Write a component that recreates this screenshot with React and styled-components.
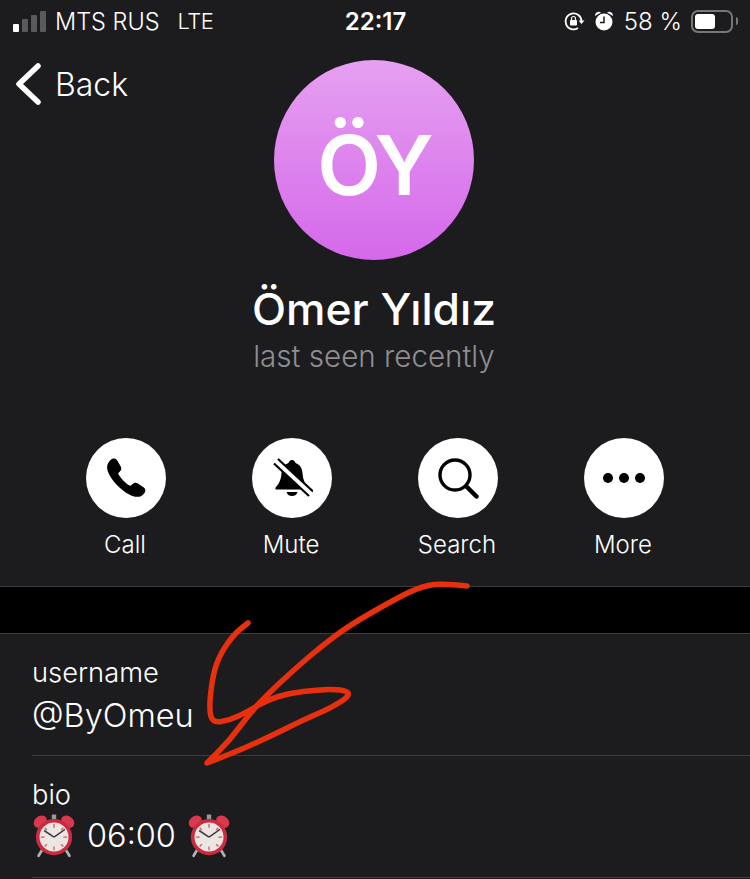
import React from 'react';
import styled, { createGlobalStyle } from 'styled-components';

const GlobalStyle = createGlobalStyle`
    html, body {
        margin: 0;
        padding: 0;
        background: #1c1c1e;
    }
`

// points read off the reference, smoothed with quadratics through the midpoints
const scribblePoints = [
    [467, 586], [440, 583], [417, 588], [390, 602], [350, 625], [323, 645], [297, 667], [270, 692],
    [250, 713], [230, 740], [207, 763], [233, 753], [267, 738], [303, 720], [333, 707], [352, 694],
    [340, 689], [317, 690], [290, 693], [267, 700], [247, 712], [230, 720], [213, 723], [209, 710],
    [212, 680], [218, 658], [233, 635], [248, 623],
];

function smoothPath(points) {
    let d = `M${points[0][0]} ${points[0][1]}`;
    for (let i = 1; i < points.length - 1; i++) {
        // the tip of the arrow stays sharp
        if (points[i][0] === 207) {
            d += ` L${points[i][0]} ${points[i][1]}`;
            continue;
        }
        const midX = (points[i][0] + points[i + 1][0]) / 2;
        const midY = (points[i][1] + points[i + 1][1]) / 2;
        d += ` Q${points[i][0]} ${points[i][1]} ${midX} ${midY}`;
    }
    const last = points[points.length - 1];
    return `${d} L${last[0]} ${last[1]}`;
}

function AlarmIcon({ size }) {
    return (
        <svg width={size} height={size} viewBox="0 0 40 40">
            <path d="M9 33 L6 38" stroke="#aeb4b8" strokeWidth="2.4" strokeLinecap="round" />
            <path d="M31 33 L34 38" stroke="#aeb4b8" strokeWidth="2.4" strokeLinecap="round" />
            <rect x="18" y="0.500" width="4" height="4" fill="#9a9a9e" />
            <ellipse cx="7.500" cy="7" rx="6.500" ry="5" transform="rotate(-40 7.500 7)" fill="#d8394c" />
            <ellipse cx="32.500" cy="7" rx="6.500" ry="5" transform="rotate(40 32.500 7)" fill="#d8394c" />
            <circle cx="20" cy="21" r="16.500" fill="#c92c40" />
            <circle cx="20" cy="21" r="13.200" fill="#ece6e3" />
            <path d="M20 9v3.500M20 29.500v3.500M8 21h3.500M28.500 21h3.500M11.500 12.500l2 2M28.500 12.500l-2 2M11.500 29.500l2-2M28.500 29.500l-2-2" stroke="#c9606c" strokeWidth="1.200" />
            <path d="M20 21 L11 15" stroke="#3a3a40" strokeWidth="1.400" />
            <path d="M20 21 L30 14" stroke="#3a3a40" strokeWidth="1.200" />
        </svg>
    )
}

function CallIcon() {
    return (
        <svg width="44" height="44" viewBox="0 0 42 42">
            <path d="M6 4 C8 2 11 2 12.500 4 L16 10 C17 12 16.500 13.500 15 15 L13.500 16.500 C14.500 20 21.500 27.500 25.500 28.500 L27 27 C28.500 25.500 30 25 32 26 L38 30 C40 31.500 40 34 38 36 L36.500 37.500 C34 40 28 39.500 21 35 C12 29 4 19 3 12 C2.500 9 4 6 6 4 Z" fill="#000" />
        </svg>
    )
}

function MuteIcon() {
    return (
        <svg width="42" height="42" viewBox="0 0 42 42">
            <path d="M21 3 C23 3 24 4.500 24.500 6 C29 7.500 31 11 31.500 16 C32 23 34 27 37.500 30.500 L37.500 32.500 L4.500 32.500 L4.500 30.500 C8 27 10 23 10.500 16 C11 11 13 7.500 17.500 6 C18 4.500 19 3 21 3 Z" fill="#000" />
            <path d="M15.500 35 H26.500 C25.500 38 23.500 39 21 39 C18.500 39 16.500 38 15.500 35 Z" fill="#000" />
            <path d="M4 4 L40 37" stroke="#fff" strokeWidth="6" />
            <path d="M3 6.500 L38 39" stroke="#000" strokeWidth="2.200" />
            <path d="M7 2 L42 34.500" stroke="#000" strokeWidth="2.200" />
        </svg>
    )
}

function SearchIcon() {
    return (
        <svg width="42" height="42" viewBox="0 0 42 42" fill="none" stroke="#000">
            <circle cx="18" cy="18" r="15" strokeWidth="3.400" />
            <path d="M29.500 29.500 L39.500 39.500" strokeWidth="4.500" strokeLinecap="round" />
        </svg>
    )
}

function MoreIcon() {
    return (
        <svg width="44" height="12" viewBox="0 0 44 12" fill="#000">
            <circle cx="6" cy="6" r="5" />
            <circle cx="22" cy="6" r="5" />
            <circle cx="38" cy="6" r="5" />
        </svg>
    )
}

const actions = [
    { label: 'Call', icon: <CallIcon /> },
    { label: 'Mute', icon: <MuteIcon /> },
    { label: 'Search', icon: <SearchIcon /> },
    { label: 'More', icon: <MoreIcon /> },
];

export default function App() {
    return (
        <Page>
            <GlobalStyle />
            <StatusBar>
                <StatusSide>
                    <Signal>
                        <Bar $h={8} $on />
                        <Bar $h={13} />
                        <Bar $h={17} />
                        <Bar $h={21} />
                    </Signal>
                    <Carrier>MTS RUS</Carrier>
                    <Network>LTE</Network>
                </StatusSide>
                <Clock>22:17</Clock>
                <StatusSide $right>
                    <svg width="22" height="22" viewBox="0 0 22 22" fill="none">
                        <path d="M18.500 11 A8 8 0 1 0 15 18" stroke="#fff" strokeWidth="1.800" />
                        <path d="M15.500 10.500 h6 l-3 3.500 z" fill="#fff" />
                        <rect x="7" y="10" width="7" height="5.500" rx="1" fill="#fff" />
                        <path d="M8.500 10 V8.500 a2 2 0 0 1 4 0 V10" stroke="#fff" strokeWidth="1.200" />
                    </svg>
                    <AlarmGlyph width="20" height="22" viewBox="0 0 20 22">
                        <circle cx="10" cy="12" r="8.500" fill="#fff" />
                        <path d="M1 6 C1 2 5 1 7 2.500 Z M19 6 C19 2 15 1 13 2.500 Z" fill="#fff" />
                        <path d="M10 6.500 V12.500 H6" stroke="#1c1c1e" strokeWidth="1.500" fill="none" />
                    </AlarmGlyph>
                    <Percent>58 %</Percent>
                    <Battery>
                        <BatteryFill $level={58} />
                    </Battery>
                    <BatteryCap />
                </StatusSide>
            </StatusBar>

            <Header>
                <BackLink>
                    <svg width="28" height="44" viewBox="0 0 28 44" fill="none">
                        <path d="M24 4 L5 22 L24 40" stroke="#fff" strokeWidth="5.500" strokeLinecap="round" strokeLinejoin="round" />
                    </svg>
                    <BackText>Back</BackText>
                </BackLink>
                <Avatar>ÖY</Avatar>
                <Name>Ömer Yıldız</Name>
                <LastSeen>last seen recently</LastSeen>
            </Header>

            <Actions>
                {actions.map((a) => (
                    <Action key={a.label}>
                        <Circle>{a.icon}</Circle>
                        <ActionLabel>{a.label}</ActionLabel>
                    </Action>
                ))}
            </Actions>

            <Gap />

            <Section>
                <Row>
                    <Label>username</Label>
                    <Value $top={3}>@ByOmeu</Value>
                </Row>
                <Row>
                    <Label>bio</Label>
                    <Value $top={1}>
                        <AlarmIcon size={44} />
                        <span>06:00</span>
                        <AlarmIcon size={44} />
                    </Value>
                </Row>
            </Section>

            <Scribble width="750" height="879" viewBox="0 0 750 879" fill="none">
                <path
                    d={smoothPath(scribblePoints)}
                    stroke="#e8300e"
                    strokeWidth="5.500"
                    strokeLinecap="round"
                    strokeLinejoin="round"
                />
            </Scribble>
        </Page>
    )
}

const Page = styled.div`
    width: 750px;
    height: 879px;
    position: relative;
    overflow: hidden;
    background: #1c1c1e;
    color: #fff;
    font-family: Inter, "Liberation Sans", sans-serif;
`
const StatusBar = styled.div`
    height: 42px;
    display: grid;
    grid-template-columns: 1fr auto 1fr;
    align-items: center;
    padding: 0 12px 0 13px;
`
const StatusSide = styled.div`
    display: flex;
    align-items: center;
    justify-content: ${(props) => (props.$right ? 'flex-end' : 'flex-start')};
    gap: ${(props) => (props.$right ? '9px' : '18px')};
`
const Signal = styled.div`
    display: flex;
    align-items: flex-end;
    gap: 3px;
    margin-right: -9px;
`
const Bar = styled.div`
    width: 6px;
    height: ${(props) => props.$h}px;
    border-radius: 1px;
    background: ${(props) => (props.$on ? '#fff' : '#5a5a5c')};
`
const Carrier = styled.span`
    font-size: 23.500px;
    font-weight: 300;
`
const Network = styled.span`
    font-size: 22px;
    font-weight: 300;
    letter-spacing: -0.600px;
`
const Clock = styled.span`
    font-size: 24px;
    font-weight: 600;
`
const AlarmGlyph = styled.svg`
    margin-right: 1px;
`
const Percent = styled.span`
    font-size: 24px;
    font-weight: 300;
`
const Battery = styled.div`
    width: 42px;
    height: 23px;
    box-sizing: border-box;
    border: 2px solid #77777a;
    border-radius: 7px;
    padding: 2px;
    margin-right: -6px;
`
const BatteryFill = styled.div`
    width: ${(props) => props.$level}%;
    height: 100%;
    min-width: 20px;
    background: #fff;
    border-radius: 3px;
`
const BatteryCap = styled.div`
    width: 2px;
    height: 8px;
    background: #77777a;
    border-radius: 0 2px 2px 0;
`
const Header = styled.div`
    position: relative;
    display: flex;
    flex-direction: column;
    align-items: center;
    padding: 18px 2px 0 0;
`
const BackLink = styled.div`
    position: absolute;
    left: 14px;
    top: 20px;
    display: flex;
    align-items: center;
    gap: 13px;
`
const BackText = styled.span`
    font-size: 32px;
    font-weight: 300;
`
const Avatar = styled.div`
    width: 200px;
    height: 200px;
    box-sizing: border-box;
    padding-top: 10px;
    border-radius: 50%;
    background: linear-gradient(180deg, #e6a0f1 0%, #d568ea 100%);
    display: flex;
    align-items: center;
    justify-content: center;
    font-size: 83px;
    font-weight: 600;
    letter-spacing: -3px;
`
const Name = styled.div`
    margin-top: 22px;
    font-size: 44.400px;
    font-weight: 500;
    line-height: 54px;
`
const LastSeen = styled.div`
    font-size: 29.600px;
    font-weight: 300;
    line-height: 40px;
    color: #8e8e93;
`
const Actions = styled.div`
    margin-top: 62px;
    padding: 0 0 0 86px;
    display: flex;
    gap: 86px;
`
const Action = styled.div`
    width: 80px;
    display: flex;
    flex-direction: column;
    align-items: center;
`
const Circle = styled.div`
    width: 80px;
    height: 80px;
    border-radius: 50%;
    background: #fff;
    display: flex;
    align-items: center;
    justify-content: center;
`
const ActionLabel = styled.span`
    margin-top: 13px;
    padding-right: 2px;
    font-size: 24px;
    font-weight: 300;
    line-height: 28px;
    white-space: nowrap;
`
const Gap = styled.div`
    margin-top: 27px;
    height: 46px;
    background: #000;
    border-top: 1px solid #3d3d40;
    border-bottom: 1px solid #3d3d40;
`
const Section = styled.div`
    padding-left: 32px;
`
const Row = styled.div`
    height: 122px;
    box-sizing: border-box;
    padding-top: 21px;
    border-bottom: 1px solid #3d3d40;
`
const Label = styled.div`
    font-size: 27.300px;
    font-weight: 300;
    line-height: 36px;
`
const Value = styled.div`
    margin-top: ${(props) => props.$top}px;
    display: flex;
    align-items: center;
    gap: 11px;
    font-size: 32.500px;
    font-weight: 300;
    line-height: 44px;
`
const Scribble = styled.svg`
    position: absolute;
    left: 0;
    top: 0;
    pointer-events: none;
`
